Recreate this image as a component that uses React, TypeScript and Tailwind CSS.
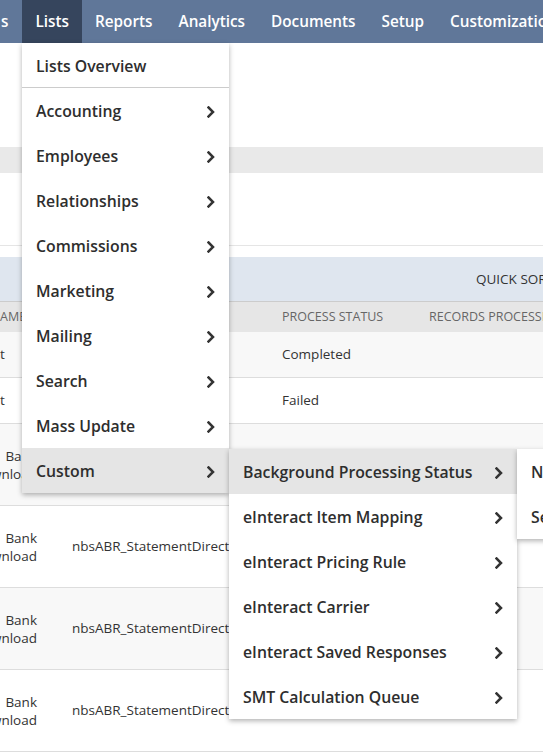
import React from "react";

const Chevron = () => (
  <svg width="8" height="12" viewBox="0 0 8 12" className="shrink-0">
    <polyline points="1.5,1.5 6,6 1.5,10.5" fill="none" stroke="#333333" strokeWidth="2.5" strokeLinecap="square" strokeLinejoin="miter" />
  </svg>
);

const MenuItem = ({ label, active, arrow = true }: { label: string; active?: boolean; arrow?: boolean }) => (
  <div className={`flex h-[45px] items-center justify-between pl-[14px] pr-[14px] pt-[3px] ${active ? "bg-[#e5e5e5]" : ""}`}>
    <span className="whitespace-nowrap text-[15.8px] font-semibold text-[#2e2e2e]">{label}</span>
    {arrow && <Chevron />}
  </div>
);

const navItems = ["Reports", "Analytics", "Documents", "Setup", "Customization"];

export default function App() {
  const rowsTall = [
    { bg: "bg-[#f8f8f8]", c2: "" },
    { bg: "bg-white", c2: "nbsABR_StatementDirect" },
    { bg: "bg-[#f8f8f8]", c2: "nbsABR_StatementDirect" },
    { bg: "bg-white", c2: "nbsABR_StatementDirect" },
  ];
  return (
    <div className="relative h-[755px] w-full overflow-hidden bg-white" style={{ fontFamily: '"Open Sans", sans-serif' }}>
      {/* nav */}
      <div className="flex h-[43px] items-center bg-[#607799] text-[15.3px] font-semibold text-white whitespace-nowrap">
        <div className="flex h-full shrink-0 items-center pl-[1px] pr-[14px]">s</div>
        <div className="flex h-full shrink-0 items-center bg-[#36455d] px-[13px]">Lists</div>
        {navItems.map((n) => (
          <div key={n} className="flex h-full shrink-0 items-center px-[13px]">{n}</div>
        ))}
      </div>

      {/* page background */}
      <div className="h-[104px]" />
      <div className="h-[26px] bg-[#e9e9e9]" />
      <div className="h-[73px] border-b border-[#e5e5e5]" />
      <div className="h-[11px]" />
      <div className="flex h-[44px] items-center bg-[#dfe6ef] text-[13.5px] text-[#333333] whitespace-nowrap">
        <span className="w-[476px] shrink-0" />
        <span className="shrink-0">QUICK SORT</span>
      </div>
      <div className="flex h-[31px] items-center border-t border-[#cccccc] bg-[#e6e6e6] text-[12.5px] text-[#666666] whitespace-nowrap">
        <span className="w-[282px] shrink-0">AME</span>
        <span className="w-[147px] shrink-0">PROCESS STATUS</span>
        <span className="shrink-0">RECORDS PROCESSED</span>
      </div>
      <div className="flex h-[46px] items-center border-b border-[#dddddd] bg-[#f8f8f8] text-[13.5px] text-[#333333]">
        <span className="w-[282px] shrink-0">t</span>
        <span className="shrink-0">Completed</span>
      </div>
      <div className="flex h-[46px] items-center border-b border-[#dddddd] bg-white text-[13.5px] text-[#333333]">
        <span className="w-[282px] shrink-0">t</span>
        <span className="shrink-0">Failed</span>
      </div>
      {rowsTall.map((r, i) => (
        <div key={i} className={`flex h-[82px] items-center border-b border-[#dddddd] ${r.bg} text-[13.5px] text-[#333333] whitespace-nowrap`}>
          <div className="flex w-[37px] shrink-0 flex-col items-end leading-[18px]">
            <span>Bank</span>
            <span>Download</span>
          </div>
          <span className="w-[35px] shrink-0" />
          <span className="w-[210px] shrink-0">{r.c2}</span>
          <span className="shrink-0">Completed</span>
        </div>
      ))}

      {/* Lists menu */}
      <div className="absolute left-[22px] top-[43px] w-[207px] bg-white shadow-[0_2px_5px_rgba(0,0,0,0.3)]">
        <div className="flex h-[45px] items-center border-b border-[#cccccc] pl-[14px] pt-[3px]">
          <span className="text-[15.8px] font-semibold text-[#2e2e2e]">Lists Overview</span>
        </div>
        <MenuItem label="Accounting" />
        <MenuItem label="Employees" />
        <MenuItem label="Relationships" />
        <MenuItem label="Commissions" />
        <MenuItem label="Marketing" />
        <MenuItem label="Mailing" />
        <MenuItem label="Search" />
        <MenuItem label="Mass Update" />
        <MenuItem label="Custom" active />
      </div>

      {/* Custom submenu */}
      <div className="absolute left-[229px] top-[449px] w-[288px] bg-white shadow-[0_2px_5px_rgba(0,0,0,0.3)]">
        <MenuItem label="Background Processing Status" active />
        <MenuItem label="eInteract Item Mapping" />
        <MenuItem label="eInteract Pricing Rule" />
        <MenuItem label="eInteract Carrier" />
        <MenuItem label="eInteract Saved Responses" />
        <MenuItem label="SMT Calculation Queue" />
      </div>

      {/* third level */}
      <div className="absolute left-[517px] top-[449px] w-[160px] bg-white shadow-[0_2px_5px_rgba(0,0,0,0.3)]">
        <MenuItem label="New" arrow={false} />
        <MenuItem label="Search" arrow={false} />
      </div>
    </div>
  );
}
